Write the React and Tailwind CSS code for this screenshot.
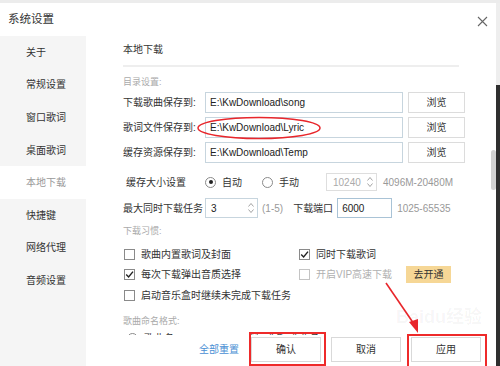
import React from 'react';

const FONT = { fontFamily: '"Liberation Sans", "Noto Sans CJK SC", sans-serif' };

const navItems = ['关于', '常规设置', '窗口歌词', '桌面歌词', '本地下载', '快捷键', '网络代理', '音频设置'];

function Checkbox({ checked, disabled }) {
  return (
    <span
      className={`w-[11px] h-[11px] border flex items-center justify-center bg-white ${
        disabled ? 'border-[#c4c4c4]' : 'border-[#8a8a8a]'
      }`}
    >
      {checked && (
        <svg width="9" height="9" viewBox="0 0 9 9">
          <path d="M1.2 4.6 L3.6 7 L8 1.6" fill="none" stroke="#222" strokeWidth="1.4" />
        </svg>
      )}
    </span>
  );
}

function Radio({ checked }) {
  return (
    <span className="w-[11px] h-[11px] rounded-full border border-[#8a8a8a] flex items-center justify-center bg-white">
      {checked && <span className="w-[4px] h-[4px] rounded-full bg-[#222]" />}
    </span>
  );
}

function Spinner() {
  return (
    <svg width="6" height="12" viewBox="0 0 6 12" className="shrink-0">
      <path d="M0.5 4.5 L3 1.5 L5.5 4.5" fill="none" stroke="#999" strokeWidth="0.9" />
      <path d="M0.5 7.5 L3 10.5 L5.5 7.5" fill="none" stroke="#999" strokeWidth="0.9" />
    </svg>
  );
}

function PathRow({ label, value }) {
  return (
    <div className="flex items-center h-[21px]">
      <span className="w-[82px] text-[#333]">{label}</span>
      <div className="w-[198px] h-full border border-[#c7d5de] flex items-center pl-[4px] text-[#222]">
        {value}
      </div>
      <button className="ml-[5px] w-[57px] h-full border border-[#dcdcdc] text-[#333] bg-white">浏览</button>
    </div>
  );
}

export default function App() {
  return (
    <div className="w-[500px] h-[366px] bg-[#ececec] overflow-hidden flex flex-col text-[10px]" style={FONT}>
      <div className="h-[3px] shrink-0" />
      <div className="flex flex-1">
        <div className="w-[496px] h-full bg-white flex flex-col relative">
          {/* title bar */}
          <div className="h-[33px] shrink-0 flex items-center justify-between pl-[8px] pr-[8px]">
            <span className="text-[11.5px] text-[#333]">系统设置</span>
            <svg width="11" height="11" viewBox="0 0 11 11" className="mt-[3px]">
              <path d="M1 1 L10 10 M10 1 L1 10" stroke="#666" strokeWidth="1.1" />
            </svg>
          </div>

          <div className="flex flex-1 min-h-0">
            {/* sidebar */}
            <div className="w-[86px] bg-[#f5f5f5] flex flex-col">
              {navItems.map((item) => (
                <div
                  key={item}
                  className={`h-[32.6px] flex items-center pl-[26px] ${
                    item === '本地下载' ? 'bg-white text-[#999]' : 'text-[#333]'
                  }`}
                >
                  {item}
                </div>
              ))}
            </div>

            {/* content */}
            <div className="flex-1 pl-[37px] overflow-hidden flex flex-col">
              <div className="mt-[7px] leading-[14px] text-[#333]">本地下载</div>
              <div className="mt-[8px] h-[2px] w-[336px] bg-[#eeeeee] shrink-0" />
              <div className="mt-[9px] leading-[12px] text-[9px] text-[#aaa]">目录设置:</div>
              <div className="mt-[4px] flex flex-col gap-[4px]">
                <PathRow label="下载歌曲保存到:" value="E:\KwDownload\song" />
                <PathRow label="歌词文件保存到:" value="E:\KwDownload\Lyric" />
                <PathRow label="缓存资源保存到:" value="E:\KwDownload\Temp" />
              </div>

              <div className="mt-[10px] h-[18px] flex items-center shrink-0">
                <span className="w-[82px] pl-[3px] text-[#333]">缓存大小设置</span>
                <Radio checked />
                <span className="ml-[6px] w-[40px] text-[#333]">自动</span>
                <Radio />
                <span className="ml-[6px] text-[#333]">手动</span>
                <div className="ml-[27px] w-[51px] h-full border border-[#dedede] flex items-center justify-between pl-[6px] pr-[3px] text-[#aaa]">
                  <span>10240</span>
                  <Spinner />
                </div>
                <span className="ml-[6px] text-[#999]">4096M-20480M</span>
              </div>

              <div className="mt-[7px] h-[20px] flex items-center shrink-0">
                <span className="w-[82px] text-[#333]">最大同时下载任务</span>
                <div className="w-[53px] h-full border border-[#c7d5de] flex items-center justify-between pl-[5px] pr-[3px] text-[#222]">
                  <span>3</span>
                  <Spinner />
                </div>
                <span className="ml-[4px] text-[#999]">(1-5)</span>
                <span className="ml-[10px] text-[#333]">下载端口</span>
                <div className="ml-[4px] w-[55px] h-full border border-[#a9c3d6] flex items-center pl-[4px] text-[#222]">
                  6000
                </div>
                <span className="ml-[5px] text-[#999]">1025-65535</span>
              </div>

              <div className="mt-[7px] leading-[12px] text-[9px] text-[#aaa]">下载习惯:</div>
              <div className="mt-[7px] flex flex-col">
                <div className="h-[20.5px] flex items-center">
                  <div className="w-[176px] flex items-center gap-[6px] pl-[1px]">
                    <Checkbox />
                    <span className="text-[#333]">歌曲内置歌词及封面</span>
                  </div>
                  <div className="flex items-center gap-[6px]">
                    <Checkbox checked />
                    <span className="text-[#333]">同时下载歌词</span>
                  </div>
                </div>
                <div className="h-[20.5px] flex items-center">
                  <div className="w-[176px] flex items-center gap-[6px] pl-[1px]">
                    <Checkbox checked />
                    <span className="text-[#333]">每次下载弹出音质选择</span>
                  </div>
                  <div className="flex items-center gap-[6px]">
                    <Checkbox disabled />
                    <span className="text-[#b0b0b0] w-[84px]">开启VIP高速下载</span>
                    <span className="w-[45px] h-[17px] bg-[#f6d796] flex items-center justify-center text-[#333]">
                      去开通
                    </span>
                  </div>
                </div>
                <div className="h-[20.5px] flex items-center">
                  <div className="flex items-center gap-[6px] pl-[1px]">
                    <Checkbox />
                    <span className="text-[#333]">启动音乐盒时继续未完成下载任务</span>
                  </div>
                </div>
              </div>

              <div className="mt-[9px] leading-[12px] text-[9px] text-[#aaa] shrink-0">歌曲命名格式:</div>
              <div className="mt-[2px] h-[20px] flex items-center shrink-0">
                <div className="w-[126px] flex items-center gap-[6px] pl-[4px]">
                  <Radio />
                  <span className="text-[#333]">歌曲名</span>
                </div>
                <div className="flex items-center gap-[6px]">
                  <Radio checked />
                  <span className="text-[#333]">歌手-歌曲名</span>
                </div>
              </div>
            </div>
          </div>

          {/* footer */}
          <div className="absolute left-[86px] right-0 bottom-0 h-[31px] bg-white flex items-center justify-end pr-[15px] pb-[3px]">
            <span className="text-[#4a8fd4] mr-[12px]">全部重置</span>
            <div className="flex gap-[10px]">
              {['确认', '取消', '应用'].map((b) => (
                <button key={b} className="w-[70px] h-[25px] border border-[#d9d9d9] bg-white text-[#333]">
                  {b}
                </button>
              ))}
            </div>
          </div>

          {/* scrollbar */}
          <div className="absolute left-[491px] top-[147px] w-[5px] h-[40px] rounded-full bg-[#d2d2d2]" />
        </div>
        <div className="w-[4px] flex flex-col">
          <div className="h-[82px] bg-[#eeeeee]" />
          <div className="flex-1 bg-[#2f2f2f]" />
        </div>
      </div>

      {/* watermark */}
      <div className="absolute left-[396px] top-[304px] text-[18px] font-bold text-[#000]/[0.04] pointer-events-none">
        Baidu经验
      </div>

      {/* annotations */}
      <svg className="absolute left-0 top-0 pointer-events-none" width="500" height="366">
        <ellipse cx="259" cy="128" rx="61" ry="10.5" fill="none" stroke="#e8262b" strokeWidth="1.5" />
        <line x1="386" y1="283" x2="414" y2="324" stroke="#e8262b" strokeWidth="1.6" />
        <polygon points="418,333 409,322 418,319" fill="#e8262b" />
        <rect x="250" y="333" width="75" height="32" fill="none" stroke="#ee2a2a" strokeWidth="2" />
        <rect x="408" y="335" width="78" height="32" fill="none" stroke="#ee2a2a" strokeWidth="2" />
      </svg>
    </div>
  );
}
